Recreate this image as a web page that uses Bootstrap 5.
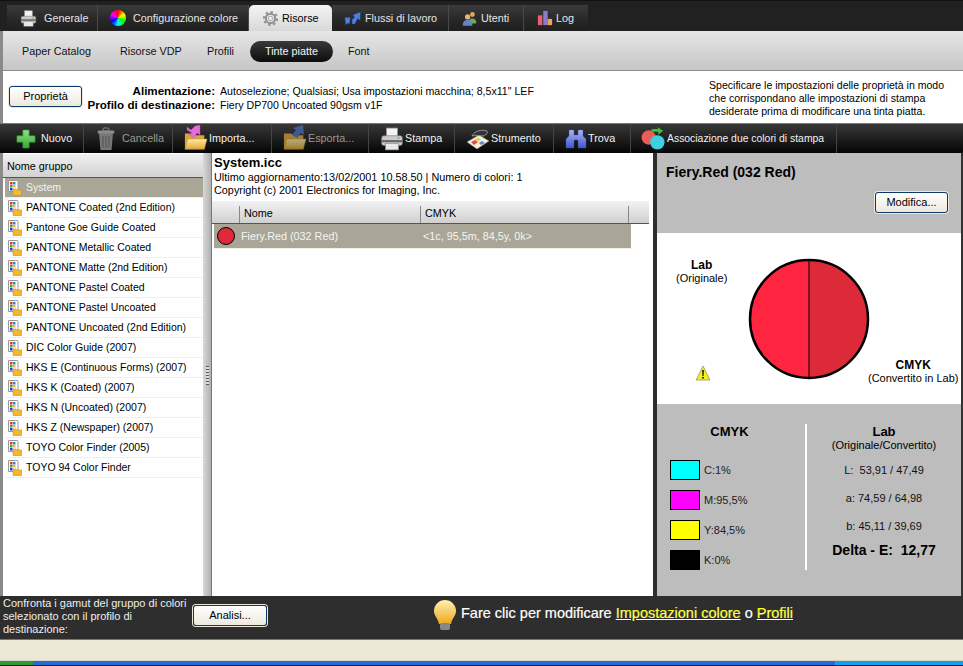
<!DOCTYPE html>
<html lang="it"><head><meta charset="utf-8"><title>Tinte piatte</title>
<link href="https://cdn.jsdelivr.net/npm/bootstrap@5.3.0/dist/css/bootstrap.min.css" rel="stylesheet">
<style>
html,body{height:666px;overflow:hidden}
body{width:963px;background:#2e2e2e;font:11px/13px "Liberation Sans",Arial,sans-serif;color:#000}
.app{height:666px}
.topbar{height:31px;background:#212121;padding:4px 0 0 7px;border-top:1px solid #111;flex:none}
.tabitem{height:26px;background:linear-gradient(#3b3b3b,#272727 60%,#1f1f1f);color:#e6e6e6;border-right:1px solid #4a4a4a;gap:3px;white-space:nowrap;font-size:10.8px}
.tabitem.on{background:linear-gradient(#f4f4f4,#d8d8d8);color:#000;border-radius:5px 5px 0 0;border:0}
.subbar{height:40px;background:linear-gradient(#e6e6e6,#c6c6c6);border-bottom:1px solid #8c8c8c;border-left:3px solid #8a8a8a;flex:none;padding:1px 0 0}
.subbar span{white-space:nowrap;color:#111;font-size:10.8px}
.subbar .pilltab{background:linear-gradient(#3a3a3a,#0c0c0c);color:#f4f4f4;border-radius:11px;height:21px;line-height:21px;text-align:center;width:83px}
.infobar{height:52px;background:#fff;border-left:3px solid #8a8a8a;flex:none}
.lab{font-weight:700;font-size:11.6px;text-align:right;width:211px;line-height:14px}
.val{line-height:14px;margin-left:5px;width:489px;font-size:10.6px}
.hint{line-height:13px;margin-top:8px;white-space:nowrap;font-size:10.55px}
.xpbtn{background:linear-gradient(#fff,#ece9de);border:1px solid #0d3a66;border-radius:3px;color:#000;font-size:11px;line-height:13px;padding:0;height:21px;box-shadow:0 0 0 1px #eee8d8}
.toolbar{height:30px;background:linear-gradient(#383838 0,#262626 35%,#050505);border-top:1px solid #777;padding-left:4px;flex:none}
.toolitem{height:100%;border-right:1px solid #444;color:#f2f2f2;white-space:nowrap;padding-left:11px;gap:1px;font-size:10.8px}
.toolitem.off{color:#9a9a90}
.mainwrap{height:443px;flex:none;background:#fff;border-left:3px solid #8a8a8a;border-right:2px solid #333}
.leftcol{width:200px;flex:none;background:#fff;overflow:hidden}
.colhead{height:24px;background:linear-gradient(#f0f0f0,#d2d2d2);border-bottom:1px solid #555;line-height:24px;padding-left:4px;margin-top:1px;font-size:10.8px}
.grp{height:20px;border-bottom:1px solid #f2f0e2;padding-left:3px;margin-left:2px;gap:4px;white-space:nowrap;color:#000;font-size:10.5px}
.grp svg{flex:none}
.grp.sel,.colorrow{background:#a9a698;color:#f5f5f0}
.splitter{width:9px;flex:none;background:linear-gradient(90deg,#d8d8d8,#b0b0b0);position:relative;border-right:1px solid #777}
.splitter i{position:absolute;left:3px;top:213px;width:3px;height:19px;background:repeating-linear-gradient(#555 0 1px,#ddd 1px 3px)}
.midcol{width:441px;flex:none;background:#fff;padding-top:2px;overflow:hidden}
.midtitle{font-weight:700;font-size:13px;line-height:16px;padding-left:2px}
.midtext{line-height:13px;padding-left:2px;font-size:10.85px}
.thead{height:23px;background:linear-gradient(#f2f2f2,#d0d0d0);border-bottom:1px solid #555;margin-top:4px;width:437px}
.thead div{border-right:1px solid #888;height:17px;margin-top:5px;padding-left:4px;line-height:15px;font-size:10.8px}
.colorrow{height:24px;width:417px;margin-left:2px;box-shadow:0 1px 0 #f2f0e2;font-size:10.8px}
.vbar{width:4px;flex:none;background:#2e2e2e}
.rightcol{flex:1;background:#bdbdbd}
.rtop{height:80px;padding:12px 13px 0 9px}
.rtitle{font-weight:700;font-size:14px;line-height:15px}
.rchart{height:171px;background:#fff;position:relative}
.pielabel{position:absolute;text-align:center;white-space:nowrap;line-height:13px}
.pielabel b{font-weight:700;font-size:12px}
.rbottom{height:192px;padding:20px 0 0 13px}
.cmykcol{width:137px;border-right:2px solid #fff;height:146px}
.coltitle{font-weight:700;font-size:13px;line-height:15px;text-align:center}
.swrow{height:30px;gap:4px;color:#222}
.swrow span{line-height:20px}
.sw{width:30px;height:20px;border:1px solid #000}
.labcol{width:154px}
.labsub{margin-bottom:4px}
.labval{height:28px;line-height:28px;color:#111}
.delta{font-weight:700;font-size:14px;line-height:15px;margin-top:3px;white-space:nowrap}
.footerbar{height:44px;background:#2e2e2e;color:#fff;flex:none;border-bottom:1px solid #777}
.ftxt{width:193px;line-height:13px;padding:1px 0 0 3px;color:#eee;flex:none}
.fmsg{font-size:14.5px;color:#fff;white-space:nowrap;-webkit-text-stroke:.2px #fff}
.fmsg a{color:#ff0}
.xptask{height:21px;background:#ebe8d6;flex:none;border-bottom:1px solid #d8d4c0}
.xpblue{height:5px;flex:none;border-bottom:1px solid #0a1a40;background:linear-gradient(90deg,#2e9a3a 0 33px,#2a68d8 33px 835px,#12a0e8 835px)}
</style></head><body>
<svg width="0" height="0" class="position-absolute">
<defs>
<linearGradient id="gr" x1="0" y1="0" x2="0" y2="1"><stop offset="0" stop-color="#8de37f"/><stop offset="1" stop-color="#3aa63a"/></linearGradient>
<linearGradient id="fo" x1="0" y1="0" x2="0" y2="1"><stop offset="0" stop-color="#ffe9a0"/><stop offset="1" stop-color="#e0a93c"/></linearGradient>
<linearGradient id="bu" x1="0" y1="0" x2="0" y2="1"><stop offset="0" stop-color="#a9b6f4"/><stop offset="1" stop-color="#4355cf"/></linearGradient>
<linearGradient id="bulb" x1="0" y1="0" x2="0" y2="1"><stop offset="0" stop-color="#fff0b0"/><stop offset="1" stop-color="#eba91c"/></linearGradient>
</defs>
<symbol id="printer" viewBox="0 0 22 22"><rect x="6" y="1" width="10" height="8" fill="#f2f2f2" stroke="#999" stroke-width=".7"/><rect x="1.500" y="8" width="19" height="9" rx="2" fill="#c9c9c9" stroke="#777" stroke-width=".6"/><rect x="1.500" y="12" width="19" height="2" fill="#666"/><rect x="5" y="15" width="12" height="6" fill="#e8e8e8" stroke="#888" stroke-width=".6"/><rect x="16" y="9.500" width="2" height="1.500" fill="#6c6"/></symbol>
<symbol id="gear" viewBox="0 0 20 20"><g fill="none" stroke="#8f8f8f"><circle cx="10" cy="10" r="5.500" stroke-width="2.400"/><circle cx="10" cy="10" r="7.800" stroke-width="2.200" stroke-dasharray="2.800 3.300"/></g><circle cx="10" cy="10" r="2.600" fill="#eee" stroke="#999"/></symbol>
<symbol id="flows" viewBox="0 0 20 16"><path d="M1 7h6l-1 7-2-1-2 2zM9 9l3-2-2-3 8-3v9l-3-2-3 6H9z" fill="#4d7fe0" stroke="#2450b0" stroke-width=".4"/></symbol>
<symbol id="users" viewBox="0 0 20 20"><circle cx="13" cy="5" r="3" fill="#e3a765"/><path d="M8 17c0-5 2-7 5-7s5 2 5 6z" fill="#67ad5a"/><circle cx="7" cy="8" r="3.300" fill="#eab079"/><path d="M1 19c0-5 2-7 6-7s6 3 6 7z" fill="#6684c8"/></symbol>
<symbol id="bars" viewBox="0 0 18 18"><rect x="1" y="6" width="5" height="11" fill="#e75f72"/><rect x="7" y="1" width="5" height="16" fill="#8b79d5"/><rect x="12" y="10" width="5" height="7" fill="#eda74a"/></symbol>
<symbol id="plus" viewBox="0 0 22 22"><path d="M7.500 1h7v6.500H21v7h-6.500V21h-7v-6.500H1v-7h6.500z" fill="url(#gr)" stroke="#2e8c2e" stroke-width=".7"/></symbol>
<symbol id="trash" viewBox="0 0 22 24"><path d="M4 6h14l-1.500 17h-11z" fill="#777"/><path d="M8 9v12M11 9v12M14 9v12" stroke="#555"/><rect x="2.500" y="3.500" width="17" height="3" rx="1.500" fill="#8c8c8c"/><rect x="8" y="1" width="6" height="3" rx="1" fill="none" stroke="#888"/></symbol>
<symbol id="folder" viewBox="0 0 26 24"><path d="M1 6h8l2 2h11v15H1z" fill="#d9a53e"/><path d="M1 23l3-11h21l-3 11z" fill="url(#fo)" stroke="#b68a2c" stroke-width=".5"/></symbol>
<symbol id="wrench" viewBox="0 0 24 22"><path d="M1 14l12-7 10 6-12 8z" fill="#f4f0d8" stroke="#888" stroke-width=".5"/><path d="M5 14l4-2 3 2-4 3z" fill="#e34b4b"/><path d="M9 11.500l3-2 3 2-3 2z" fill="#efc93c"/><path d="M13 15l3-2 3 2-4 2z" fill="#4a8ee0"/><path d="M6 8c2-5 10-7 15-5 1 2-1 4-3 5-4 0-9-1-12 0z" fill="#333" stroke="#bbb" stroke-width=".7"/></symbol>
<symbol id="binoc" viewBox="0 0 22 20"><path d="M4 1h5v5h4V1h5v6l3 3v9h-8v-8H9v8H1v-9l3-3z" fill="url(#bu)" stroke="#3a4cb8" stroke-width=".4"/></symbol>
<symbol id="assoc" viewBox="0 0 26 24"><circle cx="8" cy="11" r="7.500" fill="#e95f58"/><circle cx="17" cy="16" r="7.500" fill="#3fcfe0"/><path d="M11 2h7l-1-2 6 4-5 4 0-3h-7z" fill="#3fbf3f"/></symbol>
<symbol id="listico" viewBox="0 0 14 16"><path d="M.500.500h9l.500 1v10H.500z" fill="#fff" stroke="#999"/><rect x="2" y="2" width="2.500" height="2.500" fill="#d33"/><rect x="5" y="2" width="2.500" height="2.500" fill="#38c"/><rect x="2" y="5" width="2.500" height="2.500" fill="#3a3"/><rect x="5" y="5" width="2.500" height="2.500" fill="#e8c020"/><rect x="2" y="8" width="2.500" height="2.500" fill="#33c"/><path d="M5 9h3l1 1h4.500v5.500H5z" fill="#f4b92c" stroke="#c98f1c" stroke-width=".6"/></symbol>
</svg>
<div class="app d-flex flex-column">
  <div class="topbar d-flex">
    <div class="tabitem d-flex align-items-center" style="width:91px;padding-left:13px"><svg width="17" height="17"><use href="#printer"/></svg><span class="ms-1">Generale</span></div>
    <div class="tabitem d-flex align-items-center" style="width:151px;padding-left:12px"><span class="rounded-circle" style="width:16px;height:16px;background:conic-gradient(#f00,#ff0,#0f0,#0ff,#00f,#f0f,#f00)"></span><span class="ms-1">Configurazione colore</span></div>
    <div class="tabitem on d-flex align-items-center" style="width:83px;padding-left:13px"><svg width="17" height="17"><use href="#gear"/></svg><span>Risorse</span></div>
    <div class="tabitem d-flex align-items-center" style="width:117px;padding-left:12px"><svg width="18" height="15"><use href="#flows"/></svg><span>Flussi di lavoro</span></div>
    <div class="tabitem d-flex align-items-center" style="width:75px;padding-left:13px"><svg width="16" height="17"><use href="#users"/></svg><span>Utenti</span></div>
    <div class="tabitem d-flex align-items-center border-0" style="width:64px;padding-left:13px"><svg width="16" height="16"><use href="#bars"/></svg><span>Log</span></div>
  </div>
  <div class="subbar d-flex align-items-center">
    <span style="margin-left:19px;width:98px">Paper Catalog</span><span style="width:87px">Risorse VDP</span><span style="width:43px">Profili</span><span class="pilltab">Tinte piatte</span><span style="margin-left:15px">Font</span>
  </div>
  <div class="infobar d-flex">
    <button type="button" class="btn xpbtn" style="width:73px;margin:15px 0 0 6px;flex:none">Proprietà</button>
    <div class="d-flex flex-column" style="margin-top:13px;margin-left:-78px"><div class="d-flex"><div class="lab">Alimentazione:</div><div class="val">Autoselezione; Qualsiasi; Usa impostazioni macchina; 8,5x11" LEF</div></div><div class="d-flex"><div class="lab">Profilo di destinazione:</div><div class="val">Fiery DP700 Uncoated 90gsm v1F</div></div></div>
    <div class="hint">Specificare le impostazioni delle proprietà in modo<br>che corrispondano alle impostazioni di stampa<br>desiderate prima di modificare una tinta piatta.</div>
  </div>
  <div class="toolbar d-flex">
    <div class="toolitem d-flex align-items-center" style="width:80px;padding-left:12px"><svg width="20" height="20"><use href="#plus"/></svg><span class="ms-1">Nuovo</span></div>
    <div class="toolitem off d-flex align-items-center" style="width:89px"><svg width="22" height="24"><use href="#trash"/></svg><span class="ms-1">Cancella</span></div>
    <div class="toolitem d-flex align-items-center" style="width:99px"><span class="position-relative d-inline-block" style="width:24px;height:24px"><svg width="24" height="24"><use href="#folder"/></svg><svg class="position-absolute" style="left:2px;top:-2px" width="16" height="14"><path d="M1 2l4 3 4-4 5-1 0 10-3-2-3 5-3-2-2-1 3-2-5-3z" fill="#e66cd8" stroke="#c04ab0" stroke-width=".4"/></svg></span><span>Importa...</span></div>
    <div class="toolitem off d-flex align-items-center" style="width:97px"><span class="position-relative d-inline-block" style="width:24px;height:24px;opacity:.7"><svg width="24" height="24"><use href="#folder"/></svg><svg class="position-absolute" style="left:8px;top:-2px" width="14" height="14"><path d="M1 10l4-5-3-2 10-3 1 10-3-2-4 5z" fill="#4a6ec0"/></svg></span><span>Esporta...</span></div>
    <div class="toolitem d-flex align-items-center" style="width:86px"><svg width="24" height="24"><use href="#printer"/></svg><span>Stampa</span></div>
    <div class="toolitem d-flex align-items-center" style="width:99px"><svg width="24" height="22"><use href="#wrench"/></svg><span>Strumento</span></div>
    <div class="toolitem d-flex align-items-center" style="width:77px"><svg width="22" height="20"><use href="#binoc"/></svg><span>Trova</span></div>
    <div class="toolitem d-flex align-items-center" style="width:206px;padding-left:10px;font-size:10.4px"><svg width="25" height="23"><use href="#assoc"/></svg><span>Associazione due colori di stampa</span></div>
  </div>
  <div class="mainwrap d-flex">
    <div class="leftcol">
      <div class="colhead">Nome gruppo</div>
      <div class="grp sel d-flex align-items-center"><svg width="14" height="16"><use href="#listico"/></svg>System</div>
      <div class="grp d-flex align-items-center"><svg width="14" height="16"><use href="#listico"/></svg>PANTONE Coated (2nd Edition)</div>
      <div class="grp d-flex align-items-center"><svg width="14" height="16"><use href="#listico"/></svg>Pantone Goe Guide Coated</div>
      <div class="grp d-flex align-items-center"><svg width="14" height="16"><use href="#listico"/></svg>PANTONE Metallic Coated</div>
      <div class="grp d-flex align-items-center"><svg width="14" height="16"><use href="#listico"/></svg>PANTONE Matte (2nd Edition)</div>
      <div class="grp d-flex align-items-center"><svg width="14" height="16"><use href="#listico"/></svg>PANTONE Pastel Coated</div>
      <div class="grp d-flex align-items-center"><svg width="14" height="16"><use href="#listico"/></svg>PANTONE Pastel Uncoated</div>
      <div class="grp d-flex align-items-center"><svg width="14" height="16"><use href="#listico"/></svg>PANTONE Uncoated (2nd Edition)</div>
      <div class="grp d-flex align-items-center"><svg width="14" height="16"><use href="#listico"/></svg>DIC Color Guide (2007)</div>
      <div class="grp d-flex align-items-center"><svg width="14" height="16"><use href="#listico"/></svg>HKS E (Continuous Forms) (2007)</div>
      <div class="grp d-flex align-items-center"><svg width="14" height="16"><use href="#listico"/></svg>HKS K (Coated) (2007)</div>
      <div class="grp d-flex align-items-center"><svg width="14" height="16"><use href="#listico"/></svg>HKS N (Uncoated) (2007)</div>
      <div class="grp d-flex align-items-center"><svg width="14" height="16"><use href="#listico"/></svg>HKS Z (Newspaper) (2007)</div>
      <div class="grp d-flex align-items-center"><svg width="14" height="16"><use href="#listico"/></svg>TOYO Color Finder (2005)</div>
      <div class="grp d-flex align-items-center"><svg width="14" height="16"><use href="#listico"/></svg>TOYO 94 Color Finder</div>
    </div>
    <div class="splitter"><i></i></div>
    <div class="midcol">
      <div class="midtitle">System.icc</div>
      <div class="midtext">Ultimo aggiornamento:13/02/2001 10.58.50 | Numero di colori: 1</div>
      <div class="midtext">Copyright (c) 2001 Electronics for Imaging, Inc.</div>
      <div class="thead d-flex"><div style="width:28px;padding:0"></div><div style="width:181px">Nome</div><div style="width:208px">CMYK</div></div>
      <div class="colorrow d-flex align-items-center"><svg width="27" height="24"><circle cx="12" cy="12" r="8.500" fill="#e02a3a" stroke="#000"/></svg><span style="width:182px">Fiery.Red (032 Red)</span><span>&lt;1c, 95,5m, 84,5y, 0k&gt;</span></div>
    </div>
    <div class="vbar"></div>
    <div class="rightcol">
      <div class="rtop">
        <div class="rtitle">Fiery.Red (032 Red)</div>
        <div class="text-end"><button type="button" class="btn xpbtn" style="width:73px;margin-top:12px">Modifica...</button></div>
      </div>
      <div class="rchart">
        <div class="pielabel" style="left:19px;top:26px"><b>Lab</b><br>(Originale)</div>
        <svg class="position-absolute" style="left:91px;top:25px" width="122" height="122"><path d="M61 2a59 59 0 0 0 0 118z" fill="#ff243f"/><path d="M61 2a59 59 0 0 1 0 118z" fill="#dc2a39"/><circle cx="61" cy="61" r="59" fill="none" stroke="#000" stroke-width="2.500"/><path d="M61 2v118" stroke="#000"/></svg>
        <svg class="position-absolute" style="left:38px;top:132px" width="16" height="16"><path d="M8 1L15 15H1z" fill="#f5ee20" stroke="#8a8a60" stroke-width=".7"/><path d="M7.200 5h1.600l-.3 6h-1zM7.200 12h1.600v1.600H7.200z" fill="#000"/></svg>
        <div class="pielabel" style="left:211px;top:126px"><b>CMYK</b><br>(Convertito in Lab)</div>
      </div>
      <div class="rbottom d-flex">
        <div class="cmykcol">
          <div class="coltitle" style="padding-right:16px;margin-bottom:21px">CMYK</div>
          <div class="swrow d-flex"><div class="sw" style="background:#0ff"></div><span>C:1%</span></div>
          <div class="swrow d-flex"><div class="sw" style="background:#f0f"></div><span>M:95,5%</span></div>
          <div class="swrow d-flex"><div class="sw" style="background:#ff0"></div><span>Y:84,5%</span></div>
          <div class="swrow d-flex"><div class="sw" style="background:#000"></div><span>K:0%</span></div>
        </div>
        <div class="labcol text-center">
          <div class="coltitle">Lab</div>
          <div class="labsub">(Originale/Convertito)</div>
          <div class="labval">L:&nbsp; 53,91 / 47,49</div>
          <div class="labval">a: 74,59 / 64,98</div>
          <div class="labval">b: 45,11 / 39,69</div>
          <div class="delta">Delta - E:&nbsp; 12,77</div>
        </div>
      </div>
    </div>
  </div>
  <div class="footerbar d-flex align-items-start">
    <div class="ftxt">Confronta i gamut del gruppo di colori selezionato con il profilo di destinazione:</div>
    <button type="button" class="btn xpbtn" style="width:74px;margin-top:9px">Analisi...</button>
    <svg style="margin:3px 0 0 166px" width="24" height="33"><path d="M12 1a11 11 0 0 1 11 11c0 5-4 7-5 13H6C5 19 1 17 1 12A11 11 0 0 1 12 1z" fill="url(#bulb)"/><rect x="7" y="24" width="10" height="7" rx="2" fill="#888"/></svg>
    <div class="fmsg" style="margin:11px 0 0 4px">Fare clic per modificare <a href="#">Impostazioni colore</a> o <a href="#">Profili</a></div>
  </div>
  <div class="xptask"></div>
  <div class="xpblue"></div>
</div>
<script src="https://cdn.jsdelivr.net/npm/bootstrap@5.3.0/dist/js/bootstrap.bundle.min.js"></script>
</body></html>
